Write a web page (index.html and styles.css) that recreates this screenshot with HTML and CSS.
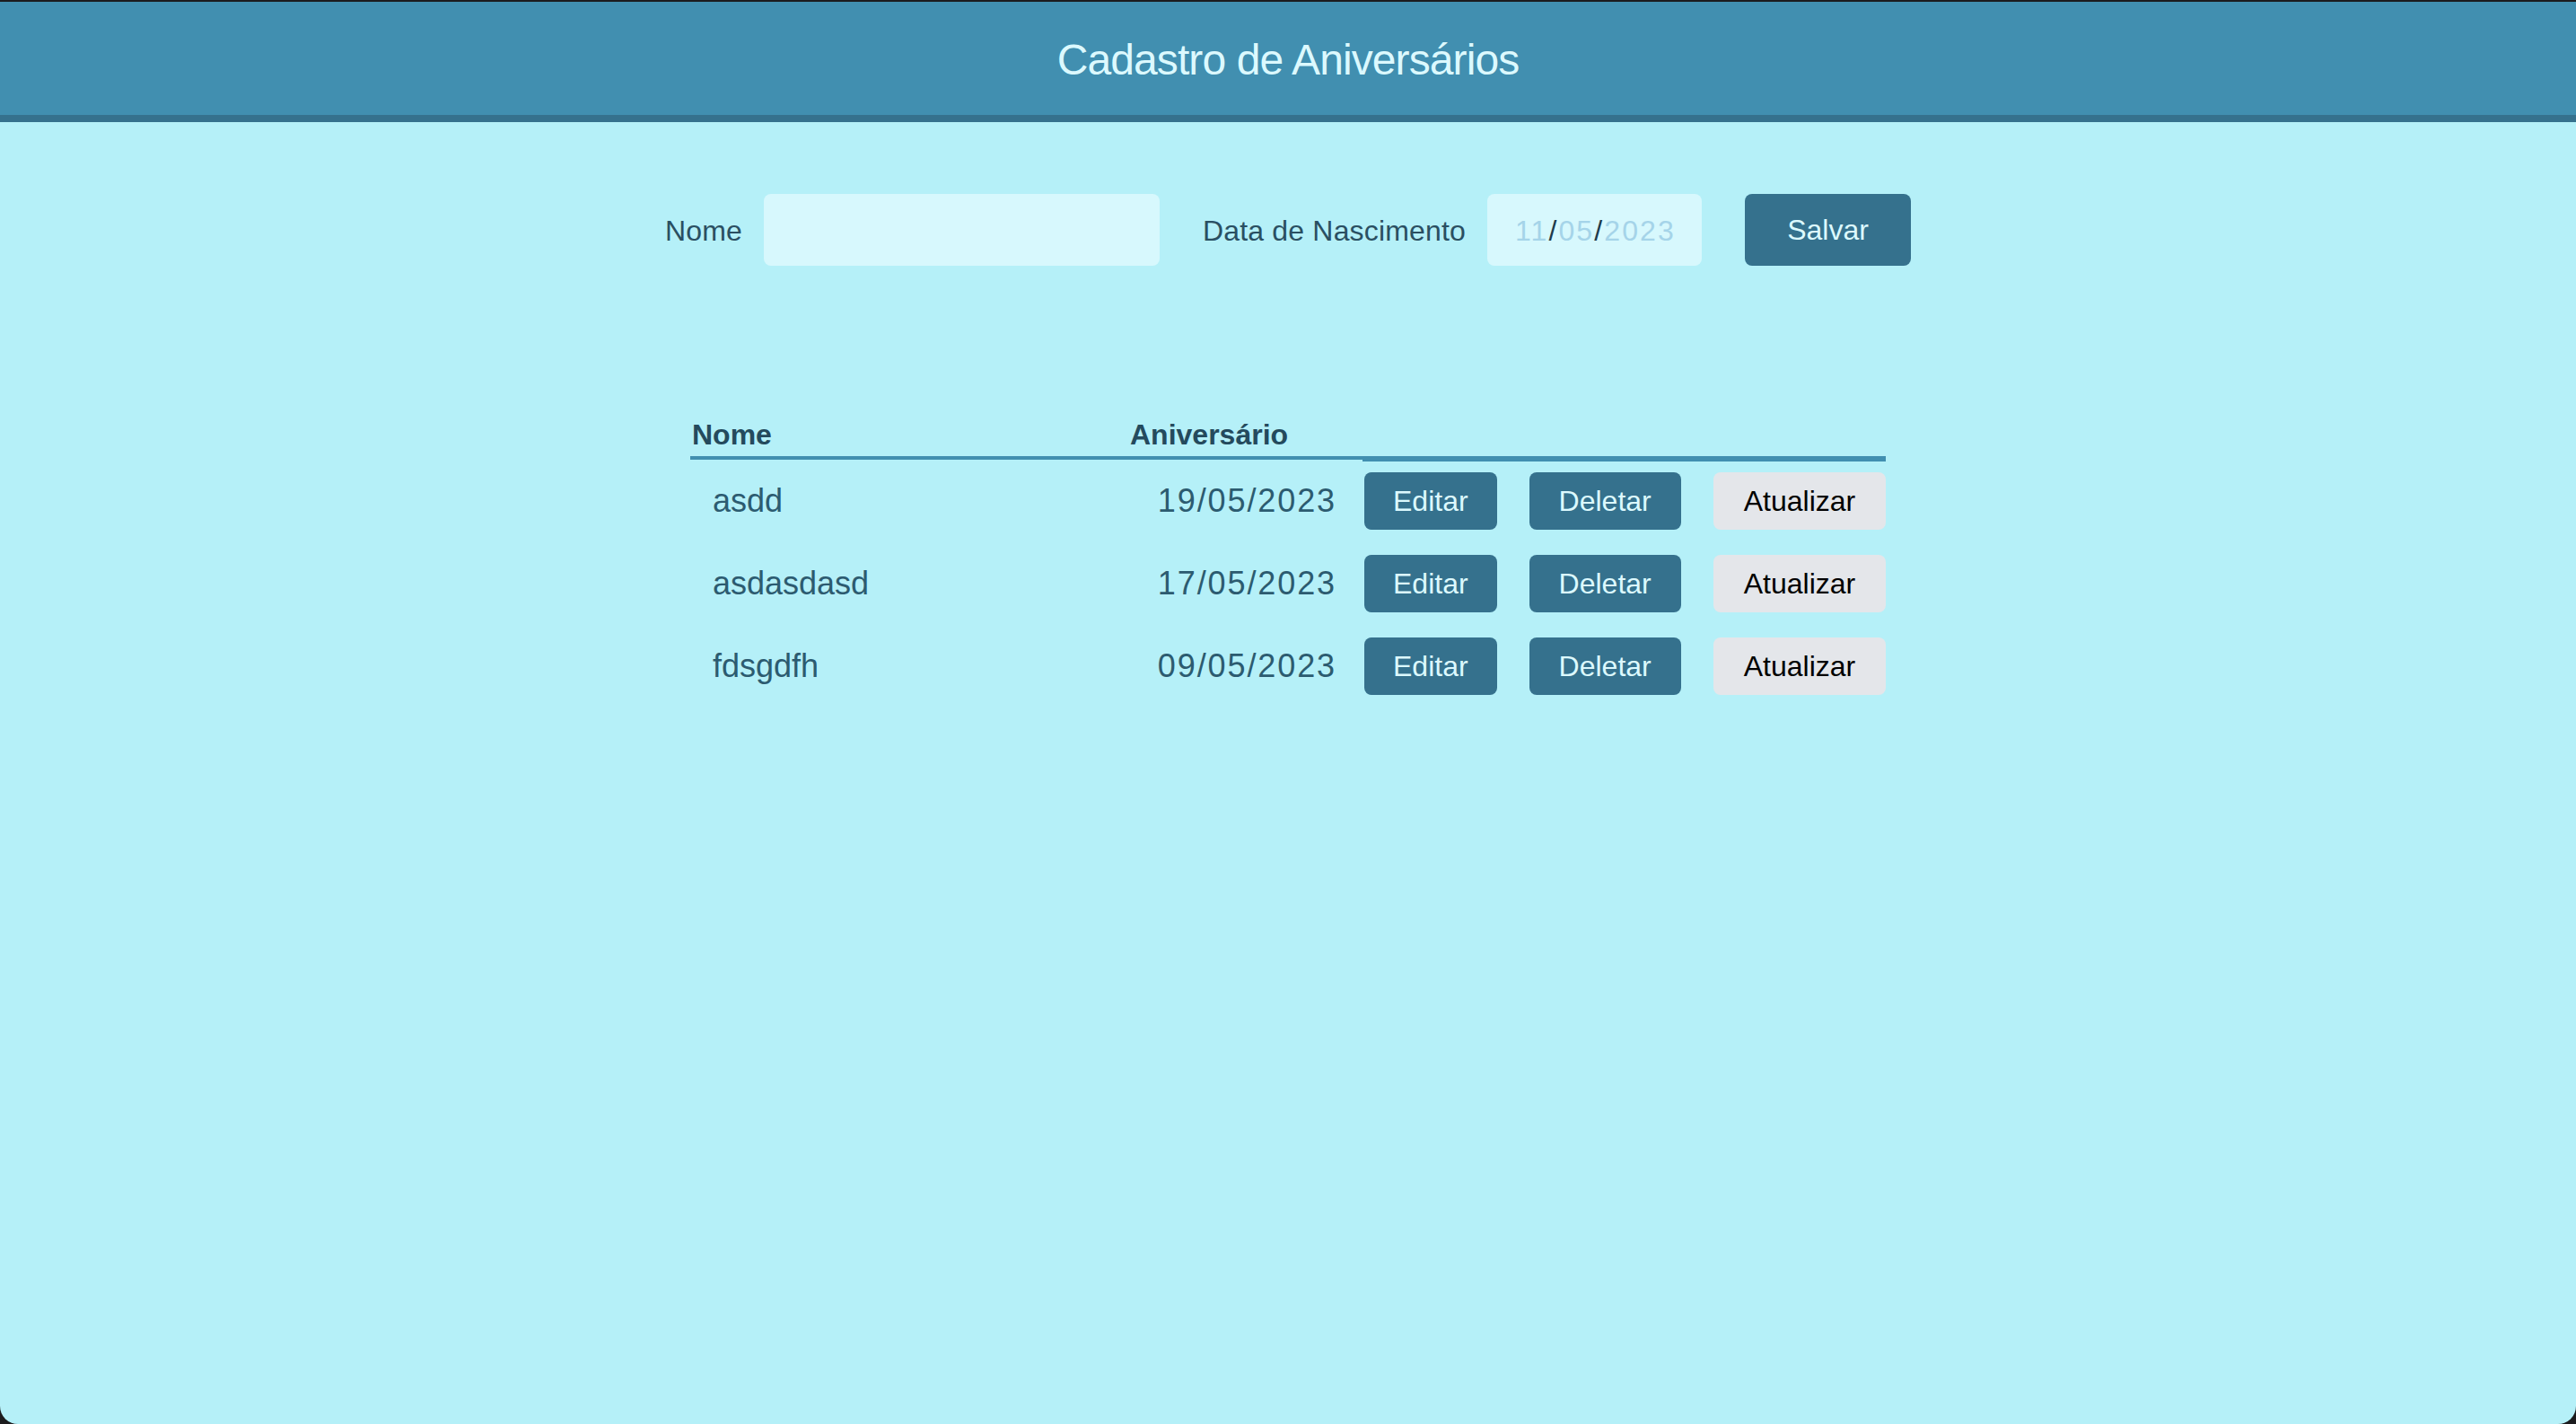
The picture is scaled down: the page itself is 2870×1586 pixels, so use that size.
FILE: index.html
```html
<!DOCTYPE html>
<html lang="pt-BR">
<head>
<meta charset="utf-8">
<title>Cadastro de Aniversários</title>
<link rel="stylesheet" href="styles.css">
</head>
<body>
<div class="app">
  <header class="topbar">
    <h1 class="title">Cadastro de Aniversários</h1>
  </header>
  <main class="content">
    <form class="entry-form">
      <div class="field">
        <label class="field-label" for="nome">Nome</label>
        <input class="text-input" id="nome" type="text">
      </div>
      <div class="field">
        <label class="field-label">Data de Nascimento</label>
        <div class="date-input"><span class="ph">11</span><span class="sep">/</span><span class="ph">05</span><span class="sep">/</span><span class="ph">2023</span></div>
      </div>
      <button class="btn btn-primary btn-save" type="button">Salvar</button>
    </form>

    <table class="list">
      <colgroup>
        <col class="col-name">
        <col class="col-date">
        <col class="col-actions">
      </colgroup>
      <thead>
        <tr>
          <th>Nome</th>
          <th>Aniversário</th>
          <th class="th-actions"></th>
        </tr>
      </thead>
      <tbody>
        <tr>
          <td class="cell-name">asdd</td>
          <td class="cell-date">19/05/2023</td>
          <td class="cell-actions"><div class="actions"><button class="btn btn-primary" type="button">Editar</button><button class="btn btn-primary btn-delete" type="button">Deletar</button><button class="btn btn-light" type="button">Atualizar</button></div></td>
        </tr>
        <tr>
          <td class="cell-name">asdasdasd</td>
          <td class="cell-date">17/05/2023</td>
          <td class="cell-actions"><div class="actions"><button class="btn btn-primary" type="button">Editar</button><button class="btn btn-primary btn-delete" type="button">Deletar</button><button class="btn btn-light" type="button">Atualizar</button></div></td>
        </tr>
        <tr>
          <td class="cell-name">fdsgdfh</td>
          <td class="cell-date">09/05/2023</td>
          <td class="cell-actions"><div class="actions"><button class="btn btn-primary" type="button">Editar</button><button class="btn btn-primary btn-delete" type="button">Deletar</button><button class="btn btn-light" type="button">Atualizar</button></div></td>
        </tr>
      </tbody>
    </table>
  </main>
</div>
</body>
</html>
```

FILE: styles.css
```css
html {
  background: #1c1c1e;
  height: 100%;
}

body {
  margin: 0;
  height: 100%;
  font-family: "Liberation Sans", Arial, Helvetica, sans-serif;
}

.app {
  box-sizing: border-box;
  margin-top: 2px;
  height: calc(100vh - 2px);
  background: #b5f0f8;
  border-radius: 0 0 20px 20px;
  overflow: hidden;
}

.topbar {
  height: 126px;
  background: #418fb0;
  border-bottom: 8px solid #35718d;
  display: flex;
  align-items: center;
  justify-content: center;
}

.title {
  margin: 0;
  padding-top: 3px;
  font-size: 48px;
  font-weight: normal;
  letter-spacing: -0.9px;
  color: #dcf9fe;
  line-height: 56px;
}

.content {
  display: flex;
  flex-direction: column;
  align-items: center;
  padding-top: 80px;
}

.entry-form {
  display: flex;
  align-items: center;
  gap: 48px;
  height: 80px;
}

.field {
  display: flex;
  align-items: center;
  gap: 24px;
}

.field-label {
  font-size: 32px;
  letter-spacing: 0.17px;
  color: #2a4f62;
  padding-top: 2px;
}

.text-input {
  box-sizing: border-box;
  width: 441px;
  height: 80px;
  border: none;
  border-radius: 8px;
  background: #d7f8fd;
  font-family: inherit;
  font-size: 32px;
  padding: 0 24px;
  outline: none;
}

.date-input {
  box-sizing: border-box;
  width: 239px;
  height: 80px;
  border-radius: 8px;
  background: #d7f8fd;
  display: flex;
  align-items: center;
  padding-left: 31px;
  font-size: 32px;
  letter-spacing: 2.1px;
  padding-top: 2px;
}

.date-input .ph {
  color: #a5d4e9;
}

.date-input .sep {
  color: #1e3b4b;
}

.btn {
  box-sizing: border-box;
  height: 64px;
  padding: 0 32px;
  border: none;
  border-radius: 8px;
  font-family: "Liberation Sans", Arial, Helvetica, sans-serif;
  font-size: 32px;
  line-height: 36px;
  cursor: pointer;
}

.btn-primary {
  background: #35718d;
  color: #dcf9fe;
}

.btn-delete {
  padding: 0 33px;
}

.btn-light {
  background: #e4e6ea;
  color: #000;
  padding: 0 34px;
}

.btn-save {
  width: 185px;
  height: 80px;
  padding: 0;
}

.list {
  margin-top: 170px;
  width: 1332px;
  table-layout: fixed;
  border-collapse: separate;
  border-spacing: 0;
}

.col-name { width: 488px; }
.col-date { width: 261px; }
.col-actions { width: 583px; }

.list th {
  text-align: left;
  font-size: 32px;
  line-height: 36px;
  font-weight: bold;
  color: #244a5d;
  padding: 0 2px 6px 2px;
  border-bottom: 4px solid #418fb0;
}

.list th.th-actions {
  box-shadow: 0 2px 0 0 #418fb0;
}

.list td {
  font-size: 36px;
  color: #2c5b70;
  padding: 14px 2px;
  height: 64px;
  vertical-align: middle;
}

.list td.cell-name {
  padding-left: 25px;
}

.list td.cell-date {
  text-align: right;
  letter-spacing: 1.9px;
  padding-right: 29px;
}

.actions {
  display: flex;
  gap: 36px;
}
```
